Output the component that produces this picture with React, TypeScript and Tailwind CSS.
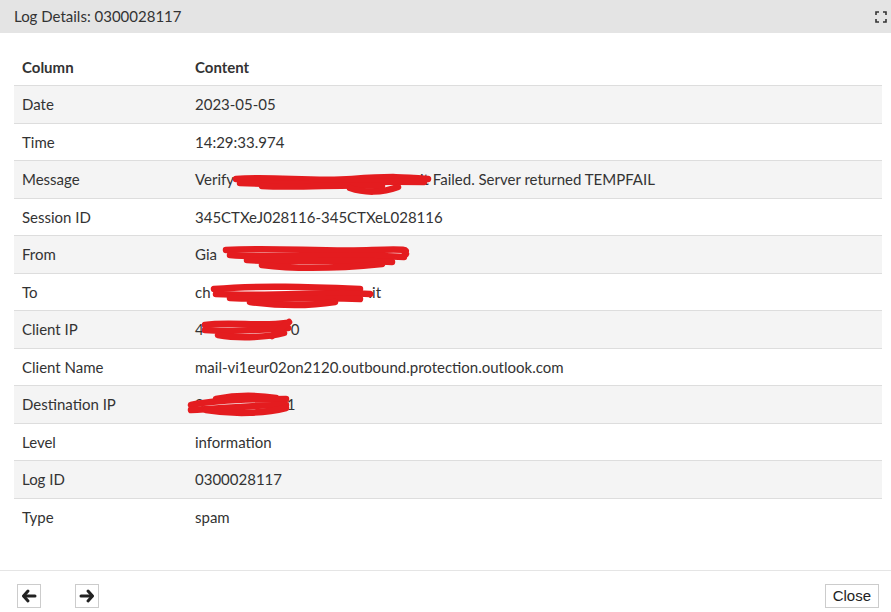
type Row = { label: string; value: React.ReactNode }

const RED = '#e41c1f'

function Scribble({ left, top, w, h, paths }: { left: number; top: number; w: number; h: number; paths: string[] }) {
  return (
    <svg
      className="absolute pointer-events-none"
      style={{ left, top }}
      width={w}
      height={h}
      viewBox={`0 0 ${w} ${h}`}
      fill="none"
    >
      {paths.map((d, i) => (
        <path key={i} d={d} stroke={RED} strokeWidth={6.5} strokeLinecap="round" strokeLinejoin="round" />
      ))}
    </svg>
  )
}

function Gap({ w }: { w: number }) {
  return <span className="inline-block" style={{ width: w }} />
}

const rows: Row[] = [
  { label: 'Date', value: '2023-05-05' },
  { label: 'Time', value: '14:29:33.974' },
  {
    label: 'Message',
    value: (
      <>
        Verify
        <Gap w={186} />
        it Failed. Server returned TEMPFAIL
        <Scribble
          left={45}
          top={11}
          w={205}
          h={24}
          paths={[
            'M4 7 C40 4, 80 10, 120 7 S172 5, 196 7',
            'M8 11 C60 14, 120 8, 192 10',
            'M30 14 C70 16, 110 12, 150 14',
            'M118 16 C132 21, 150 21, 166 15',
          ]}
        />
      </>
    ),
  },
  { label: 'Session ID', value: '345CTXeJ028116-345CTXeL028116' },
  {
    label: 'From',
    value: (
      <>
        Gia
        <Scribble
          left={35}
          top={7}
          w={190}
          h={30}
          paths={[
            'M4 7 C50 4, 100 9, 150 7 S178 9, 184 11',
            'M8 12 C60 16, 120 10, 182 14',
            'M25 17 C70 20, 120 16, 170 19',
            'M40 22 C80 27, 120 25, 160 21',
          ]}
        />
      </>
    ),
  },
  {
    label: 'To',
    value: (
      <>
        ch
        <Gap w={158} />
        .it
        <Scribble
          left={23}
          top={7}
          w={172}
          h={28}
          paths={[
            'M4 8 C50 4, 100 6, 150 8',
            'M6 13 C60 16, 120 10, 160 13',
            'M20 17 C60 19, 110 16, 150 18',
            'M40 21 C70 25, 100 25, 125 21',
          ]}
        />
      </>
    ),
  },
  {
    label: 'Client IP',
    value: (
      <>
        4
        <Gap w={87} />0
        <Scribble
          left={13}
          top={6}
          w={96}
          h={26}
          paths={[
            'M5 8 C30 4, 60 10, 86 6',
            'M5 13 C30 15, 60 13, 88 11',
            'M18 18 C40 22, 70 20, 84 16',
            'M72 19 L89 5',
          ]}
        />
      </>
    ),
  },
  { label: 'Client Name', value: 'mail-vi1eur02on2120.outbound.protection.outlook.com' },
  {
    label: 'Destination IP',
    value: (
      <>
        3
        <Gap w={83} />1
        <Scribble
          left={-1}
          top={5}
          w={106}
          h={28}
          paths={[
            'M30 8 C50 4, 70 4, 90 7',
            'M5 14 C30 9, 60 8, 100 8',
            'M5 19 C40 17, 70 14, 100 14',
            'M20 19 C50 24, 80 22, 100 17',
          ]}
        />
      </>
    ),
  },
  { label: 'Level', value: 'information' },
  { label: 'Log ID', value: '0300028117' },
  { label: 'Type', value: 'spam' },
]

function ExpandIcon() {
  return (
    <svg width="12" height="12" viewBox="0 0 12 12" fill="none" stroke="#333" strokeWidth="1.6">
      <path d="M1 4 V1 H4" />
      <path d="M8 1 H11 V4" />
      <path d="M11 8 V11 H8" />
      <path d="M4 11 H1 V8" />
    </svg>
  )
}

function Arrow({ dir }: { dir: 'left' | 'right' }) {
  return (
    <svg width="16" height="16" viewBox="0 0 16 16" fill="none" stroke="#222" strokeWidth="3" strokeLinecap="round" strokeLinejoin="round">
      {dir === 'left' ? (
        <>
          <path d="M7 3 L2.5 8 L7 13" />
          <path d="M3 8 H14" />
        </>
      ) : (
        <>
          <path d="M9 3 L13.5 8 L9 13" />
          <path d="M2 8 H13" />
        </>
      )}
    </svg>
  )
}

export default function App() {
  return (
    <div
      className="w-[891px] h-[612px] bg-white flex flex-col text-[#333] overflow-hidden"
      style={{ fontFamily: 'Lato, "Noto Sans", sans-serif' }}
    >
      <div className="h-[33px] shrink-0 bg-[#e4e4e4] flex items-center justify-between pl-[14px] pr-[4px]">
        <span className="text-[15px]">Log Details: 0300028117</span>
        <ExpandIcon />
      </div>

      <div className="flex-1 pt-[16px] pl-[14px] pr-[9px]">
        <div className="flex h-[37px] items-center border-b border-[#dddddd] text-[15px] font-bold">
          <div className="w-[173px] px-[8px]">Column</div>
          <div className="px-[8px]">Content</div>
        </div>
        {rows.map((r, i) => (
          <div
            key={r.label}
            className={`flex h-[37.5px] items-center text-[15px] ${i % 2 === 0 ? 'bg-[#f4f4f4]' : 'bg-white'} ${
              i < rows.length - 1 ? 'border-b border-[#dddddd]' : ''
            }`}
          >
            <div className="w-[173px] px-[8px] shrink-0">{r.label}</div>
            <div className="relative px-[8px] h-full flex items-center whitespace-nowrap">
              <span>{r.value}</span>
            </div>
          </div>
        ))}
      </div>

      <div className="h-[42px] shrink-0 border-t border-[#e5e5e5] flex items-start justify-between pt-[13px] pl-[17px] pr-[12px]">
        <div className="flex gap-[34px]">
          <button className="w-[24px] h-[24px] border border-[#cccccc] bg-white flex items-center justify-center">
            <Arrow dir="left" />
          </button>
          <button className="w-[24px] h-[24px] border border-[#cccccc] bg-white flex items-center justify-center">
            <Arrow dir="right" />
          </button>
        </div>
        <button
          className="h-[24px] px-[7px] border border-[#cccccc] bg-white text-[15px] text-[#222]"
          style={{ fontFamily: '"Liberation Sans", Arial, sans-serif' }}
        >
          Close
        </button>
      </div>
    </div>
  )
}
